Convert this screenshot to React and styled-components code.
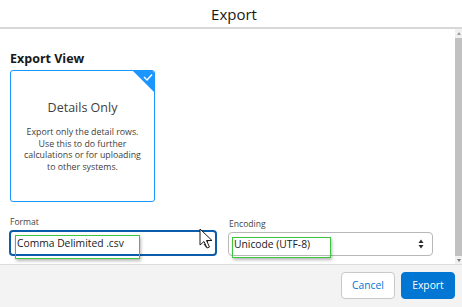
import React from 'react';
import styled, { createGlobalStyle } from 'styled-components';

const GlobalStyle = createGlobalStyle`
    html, body {
        margin: 0;
        padding: 0;
        background: #ffffff;
        font-family: "Open Sans", "Noto Sans", sans-serif;
        color: #181818;
    }
`;

const Modal = styled.div`
    width: 462px;
    height: 307px;
    display: flex;
    flex-direction: column;
    overflow: hidden;
`;

const Header = styled.div`
    height: 27px;
    display: flex;
    align-items: center;
    justify-content: center;
    border-bottom: 2px solid #d8d8d8;
    font-size: 15px;
    color: #181818;
    padding-left: 6px;
`;

const Body = styled.div`
    flex: 1;
    display: flex;
    min-height: 0;
`;

const Content = styled.div`
    flex: 1;
    padding: 22px 22px 0 9px;
    position: relative;
`;

const SectionTitle = styled.h2`
    margin: 0 0 3px 1px;
    font-size: 12.5px;
    font-weight: 700;
    line-height: 16px;
    color: #181818;
`;

const Card = styled.div`
    position: relative;
    width: 145px;
    height: 132px;
    box-sizing: border-box;
    border: 1.5px solid #1b96ff;
    border-radius: 3px;
    margin-left: 1px;
    display: flex;
    flex-direction: column;
    align-items: center;
    padding-top: 29px;
    text-align: center;
    overflow: hidden;
`;

const Corner = styled.svg`
    position: absolute;
    top: -1px;
    right: -1px;
`;

const CardTitle = styled.div`
    font-size: 12.5px;
    color: #3e3e3c;
    line-height: 16px;
    margin-bottom: 11px;
`;

const CardText = styled.div`
    font-size: 8.8px;
    line-height: 11.7px;
    color: #3e3e3c;
    white-space: nowrap;
`;

const Fields = styled.div`
    display: grid;
    grid-template-columns: 208px 205px;
    column-gap: 11px;
    margin-top: 15px;
`;

const Field = styled.div`
    display: flex;
    flex-direction: column;
    position: relative;
    padding-top: ${p => (p.$offset ? '2px' : '0')};
`;

const Label = styled.label`
    font-size: 8.6px;
    color: #444444;
    line-height: 11px;
    margin: 0 0 2px 1px;
`;

const Select = styled.div`
    height: ${p => (p.$focused ? '26px' : '24px')};
    box-sizing: border-box;
    border: ${p => (p.$focused ? '2px solid #0b5cab' : '1px solid #b8b8b8')};
    border-radius: 4px;
    display: flex;
    align-items: center;
    justify-content: space-between;
    padding: 0 ${p => (p.$focused ? '6px' : '8px')} 0 ${p => (p.$focused ? '6px' : '5px')};
    font-size: 10.3px;
    color: #181818;
    background: #ffffff;
`;

const Arrows = styled.svg`
    flex: none;
`;

const Highlight = styled.div`
    position: absolute;
    left: ${p => p.$left}px;
    top: ${p => p.$top}px;
    width: ${p => p.$width}px;
    height: ${p => p.$height}px;
    border: 1.5px solid #3fc43f;
    box-sizing: border-box;
    box-shadow: 1px 2px 3px rgba(0, 0, 0, 0.28);
    pointer-events: none;
`;

const Cursor = styled.svg`
    position: absolute;
    left: 199px;
    top: 199px;
`;

const Scrollbar = styled.div`
    width: 7px;
    background: #f0f0f0;
    display: flex;
    flex-direction: column;
    align-items: center;
    padding: 3px 0 2px;
    gap: 3px;
`;

const ScrollArrow = styled.div`
    width: 0;
    height: 0;
    border-left: 2.5px solid transparent;
    border-right: 2.5px solid transparent;
    ${p => (p.$down ? 'border-top: 3px solid #7a7a7a;' : 'border-bottom: 3px solid #a0a0a0;')}
`;

const Thumb = styled.div`
    flex: 1;
    width: 7px;
    background: #c1c1c1;
`;

const Footer = styled.div`
    height: 40px;
    border-top: 1px solid #dcdcdc;
    background: #f3f3f3;
    display: flex;
    align-items: center;
    justify-content: flex-end;
    gap: 6px;
    padding: 0 7px 2px 0;
`;

const Button = styled.button`
    width: 54px;
    height: 27px;
    box-sizing: border-box;
    border-radius: 4px;
    font-family: inherit;
    font-size: 10.3px;
    cursor: pointer;
    border: 1px solid ${p => (p.$brand ? '#0176d3' : '#c9c9c9')};
    background: ${p => (p.$brand ? '#0176d3' : '#ffffff')};
    color: ${p => (p.$brand ? '#ffffff' : '#0176d3')};
`;

const SelectArrows = () => (
    <Arrows width="6" height="10" viewBox="0 0 6 10">
        <path d="M3 0.5 L5.5 4 L0.5 4 Z" fill="#2b2b2b" />
        <path d="M3 9.5 L5.5 6 L0.5 6 Z" fill="#2b2b2b" />
    </Arrows>
);

export default function App() {
    return (
        <Modal>
            <GlobalStyle />
            <Header>Export</Header>
            <Body>
                <Content>
                    <SectionTitle>Export View</SectionTitle>
                    <Card>
                        <Corner width="24" height="24" viewBox="0 0 24 24">
                            <polygon points="1,0 24,0 24,23" fill="#1b96ff" />
                            <path d="M13 7 L16 10 L21 4.5" stroke="#ffffff" strokeWidth="1.4" fill="none" />
                        </Corner>
                        <CardTitle>Details Only</CardTitle>
                        <CardText>
                            Export only the detail rows.
                            <br />
                            Use this to do further
                            <br />
                            calculations or for uploading
                            <br />
                            to other systems.
                        </CardText>
                    </Card>
                    <Fields>
                        <Field>
                            <Label>Format</Label>
                            <Select $focused>
                                <span>Comma Delimited .csv</span>
                                <SelectArrows />
                            </Select>
                            <Highlight $left={6} $top={18} $width={125} $height={24} />
                        </Field>
                        <Field $offset>
                            <Label>Encoding</Label>
                            <Select>
                                <span>Unicode (UTF-8)</span>
                                <SelectArrows />
                            </Select>
                            <Highlight $left={4} $top={20} $width={99} $height={21} />
                        </Field>
                    </Fields>
                    <Cursor width="16" height="22" viewBox="0 0 16 22">
                        <path d="M1 1 L1 17 L5 13.5 L8 20 L10.5 19 L7.5 12.5 L13 12.5 Z" fill="#ffffff" stroke="#1a1a1a" strokeWidth="1" />
                    </Cursor>
                </Content>
                <Scrollbar>
                    <ScrollArrow />
                    <Thumb />
                    <ScrollArrow $down />
                </Scrollbar>
            </Body>
            <Footer>
                <Button>Cancel</Button>
                <Button $brand>Export</Button>
            </Footer>
        </Modal>
    );
}
